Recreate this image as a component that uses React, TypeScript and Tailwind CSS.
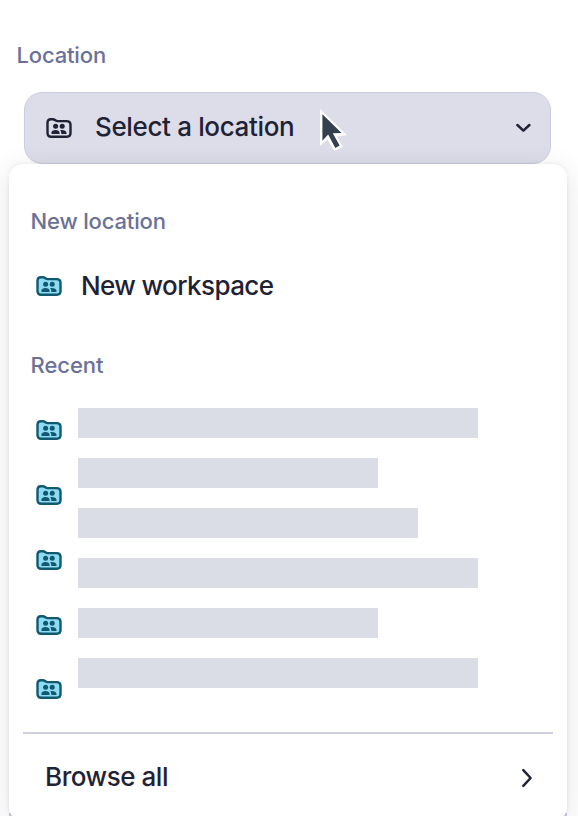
import clsx from "clsx";

const recentIcons = ["first", "second", "third", "fourth", "fifth"];

const placeholders = ["w-[400px]", "w-[300px]", "w-[340px]", "w-[400px]", "w-[300px]", "w-[400px]"];

function WorkspaceIcon({ className }: { className?: string }) {
  return (
    <svg viewBox="0 0 26 20" className={clsx("h-5 w-[26px] shrink-0 stroke-current", className)}>
      <path
        d="M1.5 4.7C1.5 2.5 2.8 1.2 4.8 1.2H6.8C9.2 1.2 9.4 3.1 11.6 3.1H20.6C23.2 3.1 24.5 4.4 24.5 6.8V15C24.5 17.6 23.2 18.7 20.8 18.7H5.2C2.8 18.7 1.5 17.6 1.5 15Z"
        strokeWidth="2.4"
        strokeLinejoin="round"
      />
      <g fill="currentColor" stroke="none">
        <circle cx="9.6" cy="8.2" r="2.5" />
        <circle cx="16.2" cy="8.2" r="2.5" />
        <path d="M5.5 16V14.6C5.5 12.9 7.2 12 9.5 12S13.5 12.9 13.5 14.6V16Z" />
        <path d="M14 12.1C17.5 11.4 20.5 12.8 20.5 14.8V16H15.3C15.3 14.2 15.1 13.2 14 12.1Z" />
      </g>
    </svg>
  );
}

function Cursor() {
  return (
    <svg viewBox="0 0 30 44" className="absolute left-[319px] top-[108px] h-[44px] w-[30px]">
      <path d="M1 1V38L8.2 31.3L15.4 43L23.8 38.8L17.8 28.4L28 27.3Z" fill="#fff" />
      <path d="M3.4 6.2V32.8L9.2 26.6L16.3 40L20.6 37.6L13.8 25.2L22.6 25Z" fill="#343f50" />
    </svg>
  );
}

export default function App() {
  return (
    <div className="relative h-[816px] w-[578px] overflow-hidden bg-white font-['Inter',sans-serif] font-medium text-[#1f2235]">
      <div className="pl-[16.5px] pt-10 text-[22px] leading-[30px] tracking-[-0.15px] text-[#6b7099]">Location</div>

      <button
        type="button"
        className="ml-6 mt-[22px] flex h-[72px] w-[527px] items-center rounded-[18px] border border-[#cccde0] bg-[#dddde9] pl-[21px] pr-[19px] text-left text-[26px]"
      >
        <WorkspaceIcon className="fill-none" />
        <span className="-mt-[3px] ml-[23px] grow tracking-[-0.36px]">Select a location</span>
        <svg viewBox="0 0 16 10" className="-mt-px h-2.5 w-4 fill-none stroke-current">
          <path d="M2.4 2L8.4 7.6L14.4 2" strokeWidth="2.5" strokeLinecap="round" strokeLinejoin="round" />
        </svg>
      </button>
      <Cursor />

      {/* edge of the card that continues behind the menu */}
      <div className="absolute left-[9px] top-[813px] h-2 w-[558px] bg-[#cccde0]" />

      <div className="relative ml-[9px] flex h-[657px] w-[558px] flex-col rounded-[14px] bg-white shadow-[0_0_4px_rgba(30,30,60,0.07),0_6px_28px_rgba(30,30,60,0.12)]">
        <div className="pl-[21.5px] pt-[42px] text-[22px] leading-[30px] tracking-[-0.15px] text-[#6b7099]">New location</div>
        <div className="mt-[34px] flex h-8 items-center pl-[27px] text-[26px]">
          <WorkspaceIcon className="fill-[#8edcf3] text-[#10596f]" />
          <span className="-mt-0.5 ml-[19px] tracking-[-0.6px]">New workspace</span>
        </div>

        <div className="mt-[48px] pl-[21.5px] text-[22px] leading-[30px] tracking-[-0.05px] text-[#6b7099]">Recent</div>
        <div className="mt-[28px] flex h-[280px] pl-[27px]">
          <div className="flex flex-col gap-[44.86px] pt-3">
            {recentIcons.map((name) => (
              <WorkspaceIcon key={name} className="fill-[#8edcf3] text-[#10596f]" />
            ))}
          </div>
          <div className="ml-4 flex flex-col gap-5">
            {placeholders.map((width, i) => (
              <div key={i} className={clsx("h-[30px] bg-[#dbdde6]", width)} />
            ))}
          </div>
        </div>

        <div className="mx-3.5 mt-[44px] h-0.5 shrink-0 bg-[#d0d1df]" />
        <div className="mt-[27px] flex h-8 items-center justify-between pl-9 pr-[33px] text-[26px]">
          <span className="-mt-0.5 tracking-[-0.45px]">Browse all</span>
          <svg viewBox="0 0 14 20" className="mt-0.5 h-5 w-3.5 fill-none stroke-current">
            <path d="M3.3 2.2L10.6 10L3.3 17.8" strokeWidth="2.5" strokeLinecap="round" strokeLinejoin="round" />
          </svg>
        </div>
      </div>
    </div>
  );
}
